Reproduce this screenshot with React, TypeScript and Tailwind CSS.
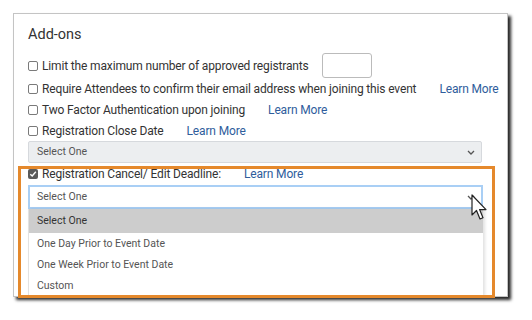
import React from 'react';

function Box({ checked = false }: { checked?: boolean }) {
  return checked ? (
    <span className="w-[10px] h-[10px] rounded-[2px] bg-[#5a5a5a] flex items-center justify-center shrink-0">
      <svg width="8" height="8" viewBox="0 0 8 8">
        <path d="M1.3 4.2 L3.2 6 L6.8 1.8" stroke="white" strokeWidth="1.4" fill="none" />
      </svg>
    </span>
  ) : (
    <span className="w-[10px] h-[10px] rounded-[2px] border border-[#7a7a7a] bg-white shrink-0" />
  );
}

function Learn() {
  return <span className="ml-[19px] text-[#2f5d9c] whitespace-nowrap">Learn More</span>;
}

function Chevron() {
  return (
    <svg width="8" height="5" viewBox="0 0 8 5" className="shrink-0">
      <path d="M1 1 L4 4 L7 1" stroke="#555" strokeWidth="1.3" fill="none" />
    </svg>
  );
}

export default function App() {
  const options = ['One Day Prior to Event Date', 'One Week Prior to Event Date', 'Custom'];

  return (
    <div className="w-[532px] h-[320px] bg-white pt-[13px] pl-[13px] font-['Roboto',sans-serif] text-[12px] tracking-[-0.15px] text-[#333]">
      <div className="relative w-[495px] h-[284px] bg-white border border-[#c4c4c4] shadow-[3px_3px_3px_rgba(0,0,0,0.85)] pl-[14px] pt-[10px]">
        <div className="h-[21px] text-[14.5px] leading-[21px] tracking-normal text-[#333]">Add-ons</div>

        <div className="mt-[8px] h-[25px] flex items-center gap-[4px] whitespace-nowrap">
          <Box />
          <span>Limit the maximum number of approved registrants</span>
          <span className="ml-[9px] w-[50px] h-[25px] border border-[#bbb] rounded-[3px]" />
        </div>
        <div className="h-[21px] flex items-center gap-[4px] whitespace-nowrap">
          <Box />
          <span>Require Attendees to confirm their email address when joining this event</span>
          <Learn />
        </div>
        <div className="h-[21px] flex items-center gap-[4px] whitespace-nowrap">
          <Box />
          <span>Two Factor Authentication upon joining</span>
          <Learn />
        </div>
        <div className="h-[21px] flex items-center gap-[4px] whitespace-nowrap">
          <Box />
          <span>Registration Close Date</span>
          <Learn />
        </div>
        <div className="w-[454px] h-[22px] bg-[#eceef0] border border-[#d6d9dd] rounded-[2px] flex items-center justify-between pl-[8px] pr-[6px] text-[10.5px] tracking-normal text-[#555]">
          <span>Select One</span>
          <Chevron />
        </div>

        <div className="h-[22px] flex items-center gap-[4px] whitespace-nowrap">
          <Box checked />
          <span>Registration Cancel/ Edit Deadline:</span>
          <Learn />
        </div>
        <div className="w-[455px] h-[24px] bg-white border-2 border-[#a9cff5] flex items-center justify-between pl-[7px] pr-[6px] text-[10.5px] tracking-normal text-[#555]">
          <span>Select One</span>
          <Chevron />
        </div>
        <div className="w-[455px] bg-white border-l border-[#e2e2e2] shadow-[2px_0_3px_rgba(0,0,0,0.12)] text-[10.5px] tracking-normal text-[#555]">
          <div className="h-[24px] bg-[#cdcdcd] text-[#333] flex items-center pl-[8px]">Select One</div>
          {options.map((o) => (
            <div key={o} className="h-[21px] flex items-center pl-[8px]">
              {o}
            </div>
          ))}
        </div>

        {/* highlight */}
        <div className="absolute left-[4px] top-[152px] w-[477px] h-[132px] border-[3px] border-[#e5892c] pointer-events-none" />

        {/* cursor */}
        <svg className="absolute left-[457px] top-[180px]" width="20" height="28" viewBox="0 0 20 28">
          <path
            d="M1 1 L1 21 L5.5 16.5 L9 25 L12 23.8 L8.6 15.6 L15 15.6 Z"
            fill="white"
            stroke="#222"
            strokeWidth="1.2"
            strokeLinejoin="round"
          />
        </svg>
      </div>
    </div>
  );
}
